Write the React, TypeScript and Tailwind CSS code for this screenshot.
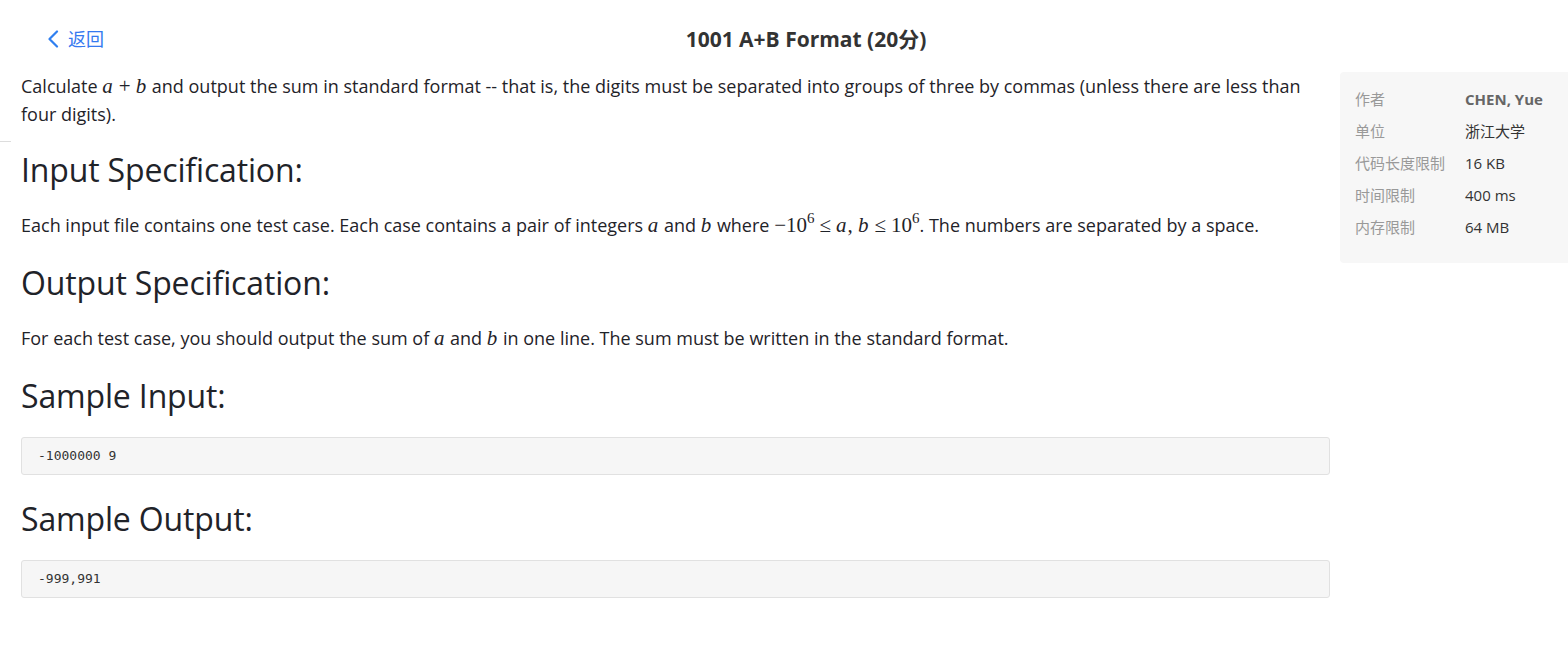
import React from 'react';

const sans = "font-['Open_Sans','Noto_Sans_CJK_SC',sans-serif]";

function M({ children, op }: { children: React.ReactNode; op?: boolean }) {
  return <span className={`font-['Liberation_Serif',serif] text-[21px] ${op ? 'mx-[5px]' : ''}`}>{children}</span>;
}

function V({ children }: { children: React.ReactNode }) {
  return <i className="font-['Liberation_Serif',serif] text-[21px] pr-[1px]">{children}</i>;
}

function Sup({ children }: { children: React.ReactNode }) {
  return <sup className="font-['Liberation_Serif',serif] text-[15px] relative -top-[9px]">{children}</sup>;
}

function Heading({ children, first }: { children: React.ReactNode; first?: boolean }) {
  return (
    <h2 className={`${first ? 'mt-[22px]' : 'mt-6'} mb-[21px] text-[32px] leading-[40px] tracking-[-0.15px] text-[#1f2329]`}>
      {children}
    </h2>
  );
}

function Code({ children }: { children: React.ReactNode }) {
  return (
    <pre className="border border-[#e1e1e1] bg-[#f6f6f6] rounded-[3px] px-4 py-[10px] text-[13px] leading-[16px] text-[#333] font-['DejaVu_Sans_Mono','Liberation_Mono',monospace]">
      {children}
    </pre>
  );
}

const meta = [
  { k: '作者', v: 'CHEN, Yue', bold: true },
  { k: '单位', v: '浙江大学' },
  { k: '代码长度限制', v: '16 KB' },
  { k: '时间限制', v: '400 ms' },
  { k: '内存限制', v: '64 MB' },
];

export default function App() {
  return (
    <div className={`${sans} bg-white w-[1568px] h-[657px] overflow-hidden relative text-[#1f2329]`}>
      {/* header */}
      <div className="h-[72px] flex items-start pt-[25px] relative">
        <a className="flex items-center gap-[9px] pl-[47px] text-[#3579f0] text-[18px] leading-[28px] cursor-pointer">
          <svg width="12" height="18" viewBox="0 0 12 18" fill="none">
            <path d="M10 1.5 L2.5 9 L10 16.5" stroke="#2f7ff0" strokeWidth="2.2" strokeLinecap="round" strokeLinejoin="round" />
          </svg>
          <span>返回</span>
        </a>
        <h1 className="absolute left-[44px] right-0 top-[25px] text-center text-[21px] leading-[28px] font-bold text-[#333] pointer-events-none">
          1001 A+B Format (20分)
        </h1>
      </div>
      <div className="absolute left-0 top-[141px] w-[11px] h-px bg-[#ddd]" />

      <div className="flex gap-[10px]">
        {/* problem body */}
        <div className="pl-[21px] w-[1330px] text-[18px] leading-[28px]">
          <p>
            Calculate <V>a</V><M op>+</M><V>b</V> and output the sum in standard format -- that is, the digits must be
            separated into groups of three by commas (unless there are less than four digits).
          </p>
          <Heading first>Input Specification:</Heading>
          <p>
            Each input file contains one test case. Each case contains a pair of integers <V>a</V> and <V>b</V> where{' '}
            <M>−10</M>
            <Sup>6</Sup>
            <M op>≤</M>
            <V>a</V>
            <M>, </M>
            <V>b</V>
            <M op>≤</M>
            <M>10</M>
            <Sup>6</Sup>. The numbers are separated by a space.
          </p>
          <Heading>Output Specification:</Heading>
          <p>
            For each test case, you should output the sum of <V>a</V> and <V>b</V> in one line. The sum must be written in
            the standard format.
          </p>
          <Heading>Sample Input:</Heading>
          <Code>-1000000 9</Code>
          <Heading>Sample Output:</Heading>
          <Code>-999,991</Code>
        </div>

        {/* sidebar */}
        <div className="w-[228px] h-[191px] shrink-0 bg-[#f7f7f7] rounded-l-[4px] pl-[15px] pt-[11px] text-[15px]">
          {meta.map((m) => (
            <div key={m.k} className="h-8 flex items-center">
              <span className="w-[110px] text-[#999]">{m.k}</span>
              <span className={m.bold ? 'font-bold text-[#666]' : 'text-[#333]'}>{m.v}</span>
            </div>
          ))}
        </div>
      </div>
    </div>
  );
}
